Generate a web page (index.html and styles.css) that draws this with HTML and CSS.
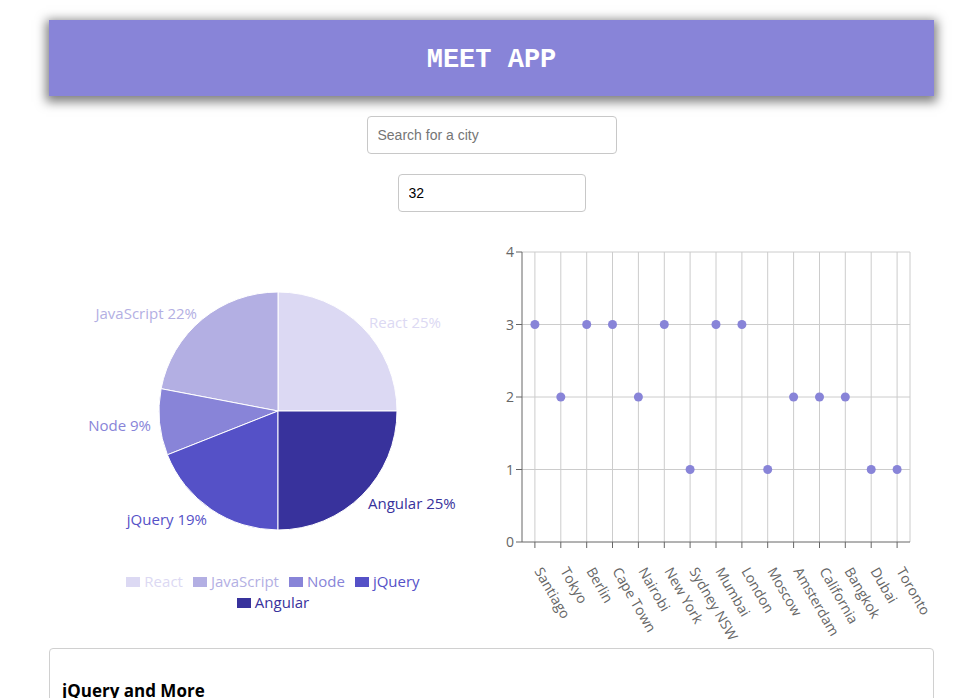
FILE: index.html
```html
<!DOCTYPE html>
<html lang="en">
<head>
<meta charset="utf-8">
<title>Meet App</title>
<link rel="stylesheet" href="styles.css">
</head>
<body>
<div class="app">
  <header class="app-header"><h1 class="app-title">MEET APP</h1></header>

  <div class="controls">
    <input class="city-search" type="text" placeholder="Search for a city">
    <input class="event-count" type="text" value="32">
  </div>

  <div class="charts">
    <div class="chart-col pie-col">
      <svg class="pie-svg" width="442" height="341" viewBox="0 0 442 341">
        <g stroke="#fff" stroke-width="1">
          <path fill="#dcd9f3" d="M229,181 L348,181 A119,119 0 0 0 229,62 Z"/>
          <path fill="#b3afe3" d="M229,181 L229,62 A119,119 0 0 0 112.1,158.7 Z"/>
          <path fill="#8884d8" d="M229,181 L112.1,158.7 A119,119 0 0 0 118.4,224.8 Z"/>
          <path fill="#5551c7" d="M229,181 L118.4,224.8 A119,119 0 0 0 229,300 Z"/>
          <path fill="#38329c" d="M229,181 L229,300 A119,119 0 0 0 348,181 Z"/>
        </g>
        <g class="pie-label">
          <text x="320" y="92" fill="#dcd9f3" text-anchor="start">React 25%</text>
          <text x="148" y="83" fill="#b3afe3" text-anchor="end">JavaScript 22%</text>
          <text x="102" y="195" fill="#8884d8" text-anchor="end">Node 9%</text>
          <text x="158" y="289" fill="#5551c7" text-anchor="end">jQuery 19%</text>
          <text x="319" y="273" fill="#38329c" text-anchor="start">Angular 25%</text>
        </g>
      </svg>
      <ul class="legend">
        <li class="legend-item"><span class="swatch sw-react"></span><span class="lg-react">React</span></li>
        <li class="legend-item"><span class="swatch sw-js"></span><span class="lg-js">JavaScript</span></li>
        <li class="legend-item"><span class="swatch sw-node"></span><span class="lg-node">Node</span></li>
        <li class="legend-item"><span class="swatch sw-jq"></span><span class="lg-jq">jQuery</span></li>
        <li class="legend-item"><span class="swatch sw-ang"></span><span class="lg-ang">Angular</span></li>
      </ul>
    </div>

    <div class="chart-col scatter-col">
      <svg class="scatter-svg" width="443" height="400" viewBox="0 0 443 400">
        <g class="grid" stroke="#ccc" stroke-width="1">
          <line x1="31" y1="22" x2="419" y2="22"/>
          <line x1="31" y1="94.5" x2="419" y2="94.5"/>
          <line x1="31" y1="167" x2="419" y2="167"/>
          <line x1="31" y1="239.5" x2="419" y2="239.5"/>
          <line x1="43.9" y1="22" x2="43.9" y2="312"/>
          <line x1="69.8" y1="22" x2="69.8" y2="312"/>
          <line x1="95.7" y1="22" x2="95.7" y2="312"/>
          <line x1="121.5" y1="22" x2="121.5" y2="312"/>
          <line x1="147.4" y1="22" x2="147.4" y2="312"/>
          <line x1="173.3" y1="22" x2="173.3" y2="312"/>
          <line x1="199.1" y1="22" x2="199.1" y2="312"/>
          <line x1="225" y1="22" x2="225" y2="312"/>
          <line x1="250.9" y1="22" x2="250.9" y2="312"/>
          <line x1="276.7" y1="22" x2="276.7" y2="312"/>
          <line x1="302.6" y1="22" x2="302.6" y2="312"/>
          <line x1="328.5" y1="22" x2="328.5" y2="312"/>
          <line x1="354.3" y1="22" x2="354.3" y2="312"/>
          <line x1="380.2" y1="22" x2="380.2" y2="312"/>
          <line x1="406.1" y1="22" x2="406.1" y2="312"/>
          <line x1="419" y1="22" x2="419" y2="312"/>
        </g>
        <g class="axis" stroke="#666" stroke-width="1">
          <line x1="31" y1="22" x2="31" y2="312"/>
          <line x1="31" y1="312" x2="419" y2="312"/>
          <line x1="25" y1="22" x2="31" y2="22"/>
          <line x1="25" y1="94.5" x2="31" y2="94.5"/>
          <line x1="25" y1="167" x2="31" y2="167"/>
          <line x1="25" y1="239.5" x2="31" y2="239.5"/>
          <line x1="25" y1="312" x2="31" y2="312"/>
          <line x1="43.9" y1="312" x2="43.9" y2="318"/>
          <line x1="69.8" y1="312" x2="69.8" y2="318"/>
          <line x1="95.7" y1="312" x2="95.7" y2="318"/>
          <line x1="121.5" y1="312" x2="121.5" y2="318"/>
          <line x1="147.4" y1="312" x2="147.4" y2="318"/>
          <line x1="173.3" y1="312" x2="173.3" y2="318"/>
          <line x1="199.1" y1="312" x2="199.1" y2="318"/>
          <line x1="225" y1="312" x2="225" y2="318"/>
          <line x1="250.9" y1="312" x2="250.9" y2="318"/>
          <line x1="276.7" y1="312" x2="276.7" y2="318"/>
          <line x1="302.6" y1="312" x2="302.6" y2="318"/>
          <line x1="328.5" y1="312" x2="328.5" y2="318"/>
          <line x1="354.3" y1="312" x2="354.3" y2="318"/>
          <line x1="380.2" y1="312" x2="380.2" y2="318"/>
          <line x1="406.1" y1="312" x2="406.1" y2="318"/>
        </g>
        <g class="tick-label y-labels" text-anchor="end">
          <text x="23" y="27">4</text>
          <text x="23" y="99.5">3</text>
          <text x="23" y="172">2</text>
          <text x="23" y="244.5">1</text>
          <text x="23" y="317">0</text>
        </g>
        <g class="tick-label x-labels" text-anchor="start">
          <text x="43" y="341" transform="rotate(60 43 341)">Santiago</text>
          <text x="69" y="341" transform="rotate(60 69 341)">Tokyo</text>
          <text x="95" y="341" transform="rotate(60 95 341)">Berlin</text>
          <text x="121" y="341" transform="rotate(60 121 341)">Cape Town</text>
          <text x="147" y="341" transform="rotate(60 147 341)">Nairobi</text>
          <text x="173" y="341" transform="rotate(60 173 341)">New York</text>
          <text x="198" y="341" transform="rotate(60 198 341)">Sydney NSW</text>
          <text x="224" y="341" transform="rotate(60 224 341)">Mumbai</text>
          <text x="250" y="341" transform="rotate(60 250 341)">London</text>
          <text x="276" y="341" transform="rotate(60 276 341)">Moscow</text>
          <text x="302" y="341" transform="rotate(60 302 341)">Amsterdam</text>
          <text x="328" y="341" transform="rotate(60 328 341)">California</text>
          <text x="353" y="341" transform="rotate(60 353 341)">Bangkok</text>
          <text x="379" y="341" transform="rotate(60 379 341)">Dubai</text>
          <text x="405" y="341" transform="rotate(60 405 341)">Toronto</text>
        </g>
        <g class="dots" fill="#8884d8">
          <circle cx="43.9" cy="94.5" r="4.5"/>
          <circle cx="69.8" cy="167" r="4.5"/>
          <circle cx="95.7" cy="94.5" r="4.5"/>
          <circle cx="121.5" cy="94.5" r="4.5"/>
          <circle cx="147.4" cy="167" r="4.5"/>
          <circle cx="173.3" cy="94.5" r="4.5"/>
          <circle cx="199.1" cy="239.5" r="4.5"/>
          <circle cx="225" cy="94.5" r="4.5"/>
          <circle cx="250.9" cy="94.5" r="4.5"/>
          <circle cx="276.7" cy="239.5" r="4.5"/>
          <circle cx="302.6" cy="167" r="4.5"/>
          <circle cx="328.5" cy="167" r="4.5"/>
          <circle cx="354.3" cy="167" r="4.5"/>
          <circle cx="380.2" cy="239.5" r="4.5"/>
          <circle cx="406.1" cy="239.5" r="4.5"/>
        </g>
      </svg>
    </div>
  </div>

  <div class="event-card">
    <h2 class="event-title">jQuery and More</h2>
  </div>
</div>
</body>
</html>
```

FILE: styles.css
```css
html, body {
  margin: 0;
  padding: 0;
  background: #fff;
}

body {
  font-family: "Open Sans", "Noto Sans", sans-serif;
  overflow: hidden;
}

.app {
  margin-left: 49px;
  width: 885px;
  padding-top: 20px;
}

.app-header {
  box-sizing: border-box;
  height: 76px;
  padding-top: 4px;
  background: #8884d8;
  box-shadow: 0 3px 10px 3px rgba(0, 0, 0, 0.5);
  display: flex;
  align-items: center;
  justify-content: center;
}

.app-title {
  margin: 0;
  color: #fff;
  font-family: "Liberation Mono", "DejaVu Sans Mono", monospace;
  font-weight: bold;
  font-size: 27px;
  line-height: 1;
}

.controls {
  display: flex;
  flex-direction: column;
  align-items: center;
}

.city-search,
.event-count {
  box-sizing: border-box;
  height: 38px;
  border: 1px solid #c8c8c8;
  border-radius: 4px;
  padding: 0 10px;
  font-family: "Liberation Sans", Arial, sans-serif;
  font-size: 14px;
  color: #000;
  background: #fff;
  outline: none;
}

.city-search {
  width: 250px;
  margin-top: 20px;
}

.city-search::placeholder {
  color: #757575;
}

.event-count {
  width: 188px;
  margin-top: 20px;
}

.charts {
  display: flex;
  margin-top: 18px;
}

.chart-col {
  display: flex;
  flex-direction: column;
}

.pie-col {
  width: 442px;
}

.scatter-col {
  width: 443px;
}

.pie-svg,
.scatter-svg {
  display: block;
  overflow: visible;
}

.pie-label text {
  font-family: "Open Sans", "Noto Sans", sans-serif;
  font-size: 15px;
  dominant-baseline: central;
}

.tick-label text {
  font-family: "Open Sans", "Noto Sans", sans-serif;
  font-size: 14px;
  fill: #666;
}

.legend {
  list-style: none;
  margin: 0 0 0 49px;
  padding: 0;
  width: 360px;
  display: flex;
  flex-wrap: wrap;
  justify-content: center;
  font-size: 15px;
  line-height: 21px;
}

.legend-item {
  display: flex;
  align-items: center;
  margin-right: 10px;
}

.swatch {
  display: inline-block;
  width: 14px;
  height: 10px;
  margin-right: 4px;
}

.sw-react { background: #dcd9f3; }
.sw-js { background: #b3afe3; }
.sw-node { background: #8884d8; }
.sw-jq { background: #5551c7; }
.sw-ang { background: #38329c; }

.lg-react { color: #dcd9f3; }
.lg-js { color: #b3afe3; }
.lg-node { color: #8884d8; }
.lg-jq { color: #5551c7; }
.lg-ang { color: #38329c; }

.event-card {
  margin-top: 18px;
  border: 1px solid #d0d0d0;
  border-radius: 4px;
  padding: 0 12px 20px;
}

.event-title {
  margin: 30px 0 0;
  font-family: "Open Sans", "Noto Sans", sans-serif;
  font-weight: bold;
  font-size: 17px;
  line-height: 24px;
  color: #000;
}
```
